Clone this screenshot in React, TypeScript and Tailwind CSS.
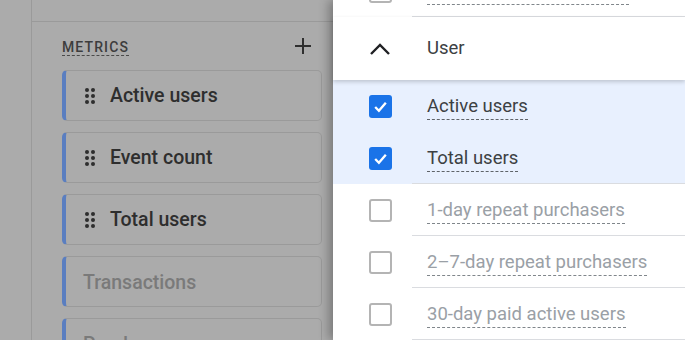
import React from 'react';

const metrics = [
  { name: 'Active users', active: true },
  { name: 'Event count', active: true },
  { name: 'Total users', active: true },
  { name: 'Transactions', active: false },
  { name: 'Purchases', active: false },
];

const options = [
  { name: 'Active users', checked: true },
  { name: 'Total users', checked: true },
  { name: '1-day repeat purchasers', checked: false },
  { name: '2–7-day repeat purchasers', checked: false },
  { name: '30-day paid active users', checked: false },
];

function DragDots() {
  return (
    <svg width="10" height="16" viewBox="0 0 10 16" className="shrink-0">
      {[2, 8, 14].map((y) => (
        <g key={y}>
          <circle cx="2" cy={y} r="2" fill="#2e2e2e" />
          <circle cx="8" cy={y} r="2" fill="#2e2e2e" />
        </g>
      ))}
    </svg>
  );
}

function Checkbox({ checked }: { checked: boolean }) {
  if (checked) {
    return (
      <div className="w-[23px] h-[23px] rounded-[3px] bg-[#1a73e8] flex items-center justify-center shrink-0">
        <svg width="17" height="17" viewBox="0 0 16 16">
          <path d="M3 8.5 L6.5 12 L13 4.5" stroke="white" strokeWidth="2.2" fill="none" />
        </svg>
      </div>
    );
  }
  return <div className="w-[23px] h-[23px] rounded-[3px] border-[2.5px] border-[#b4b4b4] shrink-0" />;
}

function OptionRow({ name, checked, line }: { name: string; checked: boolean; line: boolean }) {
  return (
    <div className={`h-[52px] flex items-center shrink-0 relative ${checked ? 'bg-[#e8f0fe]' : 'bg-white'}`}>
      <div className="w-[36px] shrink-0" />
      <Checkbox checked={checked} />
      <span
        className={`ml-[35px] mt-[2px] text-[18.5px] leading-[22px] border-b-[1.5px] border-dashed pb-[2px] whitespace-nowrap ${
          checked ? 'text-[#3c4043] border-[#5f6368]' : 'text-[#9aa0a6] border-[#80868b]'
        }`}
      >
        {name}
      </span>
      {line && <div className="absolute left-[79px] right-0 bottom-0 h-px bg-[#dadce0]" />}
    </div>
  );
}

export default function App() {
  return (
    <div className="w-[685px] h-[340px] overflow-hidden flex" style={{ fontFamily: 'Roboto, "Noto Sans", sans-serif' }}>
      <div className="w-[333px] h-full bg-[#ababab] shrink-0">
        <div className="ml-[31px] h-full border-l border-[#9a9a9a]">
          <div className="h-[22px] border-b border-[#9a9a9a]" />
          <div className="pl-[30px] pr-[11px]">
            <div className="h-[48px] flex items-center justify-between pr-[10px]">
              <span className="text-[14px] font-medium tracking-[0.08em] text-[#3d3d3d] border-b border-dashed border-[#4a4a4a] leading-[16px] mt-[3px]">
                METRICS
              </span>
              <svg width="18" height="18" viewBox="0 0 18 18">
                <path d="M9 1 V17 M1 9 H17" stroke="#2f2f2f" strokeWidth="2" />
              </svg>
            </div>
            <div className="flex flex-col gap-[11px]">
              {metrics.map((m) => (
                <div
                  key={m.name}
                  className="h-[51px] rounded-[5px] border border-[#9a9a9a] border-l-[4px] border-l-[#5a7ec0] flex items-center shrink-0"
                >
                  {m.active ? (
                    <>
                      <div className="ml-[19px]">
                        <DragDots />
                      </div>
                      <span className="ml-[15px] mt-[1px] text-[19.5px] font-medium text-[#2e2e2e] whitespace-nowrap">{m.name}</span>
                    </>
                  ) : (
                    <span className="ml-[17px] mt-[2px] text-[19.5px] font-medium text-[#7a7a7a] whitespace-nowrap">{m.name}</span>
                  )}
                </div>
              ))}
            </div>
          </div>
        </div>
      </div>
      <div className="flex-1 h-full bg-white shadow-[-4px_0_10px_rgba(0,0,0,0.3)] relative z-10 flex flex-col">
        {/* row scrolled mostly out of view */}
        <div className="h-[17px] shrink-0 relative overflow-hidden">
          <div className="absolute left-[36px] bottom-[14px]">
            <Checkbox checked={false} />
          </div>
          <div className="absolute left-[94px] w-[202px] bottom-[12px] border-b-[1.5px] border-dashed border-[#80868b]" />
          <div className="absolute left-[79px] right-0 bottom-0 h-px bg-[#dadce0]" />
        </div>
        <div className="h-[63px] flex items-center relative z-10 bg-white shrink-0 shadow-[0_2px_4px_rgba(0,0,0,0.18)]">
          <div className="w-[36px] shrink-0" />
          <svg width="22" height="14" viewBox="0 0 22 14" className="shrink-0">
            <path d="M2 12 L11 3 L20 12" stroke="#202124" strokeWidth="2.4" fill="none" />
          </svg>
          <span className="ml-[36px] text-[18.5px] text-[#3c4043]">User</span>
        </div>
        {options.map((o, i) => (
          <OptionRow key={o.name} name={o.name} checked={o.checked} line={i >= 1} />
        ))}
      </div>
    </div>
  );
}
